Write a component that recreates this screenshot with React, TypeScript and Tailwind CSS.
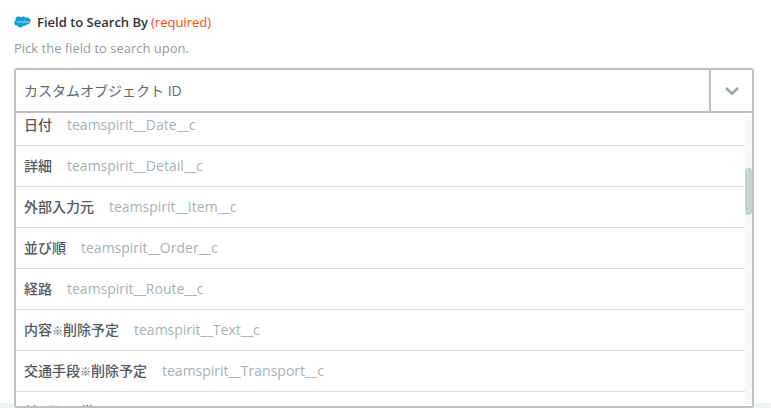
import React, { useState } from "react";

const options = [
  { label: "日付", api: "teamspirit__Date__c" },
  { label: "詳細", api: "teamspirit__Detail__c" },
  { label: "外部入力元", api: "teamspirit__Item__c" },
  { label: "並び順", api: "teamspirit__Order__c" },
  { label: "経路", api: "teamspirit__Route__c" },
  { label: "内容※削除予定", api: "teamspirit__Text__c" },
  { label: "交通手段※削除予定", api: "teamspirit__Transport__c" },
  { label: "並び順予備", api: "" },
];

function SalesforceLogo() {
  return (
    <svg width="17" height="12" viewBox="0 0 17 12" aria-hidden="true" className="shrink-0">
      <path
        fill="#0d9dda"
        d="M7 1.3C7.6.7 8.4.4 9.2.4c1.1 0 2 .6 2.5 1.4.4-.2.9-.3 1.4-.3 1.9 0 3.5 1.6 3.5 3.6s-1.6 3.6-3.5 3.6l-.7-.1c-.4.8-1.3 1.3-2.2 1.3-.4 0-.8-.1-1.1-.2-.5 1.1-1.5 1.8-2.8 1.8-1.3 0-2.4-.8-2.8-2l-.6.1C1.400 9.600.3 8.400.3 6.900c0-1 .5-1.900 1.300-2.300-.2-.4-.2-.8-.2-1.200C1.400 1.700 2.800.4 4.400.4 5.500.4 6.400.7 7 1.300z"
      />
      <text x="3" y="6.500" fontSize="3" fontStyle="italic" fill="#d9f1fb" className="font-['Open_Sans',sans-serif]">
        salesforce
      </text>
    </svg>
  );
}

// The reference mark ※ is set smaller and heavier than the kanji around it.
function OptionLabel({ text }: { text: string }) {
  const [head, tail] = text.split("※");
  return (
    <span className="font-medium text-[#54595f]">
      {head}
      {tail !== undefined && <span className="text-[11px] font-bold">※</span>}
      {tail}
    </span>
  );
}

export default function App() {
  const [value, setValue] = useState("カスタムオブジェクト ID");
  const [open, setOpen] = useState(true);

  return (
    <div className="h-screen overflow-hidden bg-[#eff3f3] font-['Open_Sans','Noto_Sans_CJK_JP',sans-serif]">
      <section className="bg-white pt-3 pr-[17px] pb-[290px] pl-[14px]">
        <label htmlFor="search-field" className="flex h-5 items-center text-[13px] leading-5">
          <SalesforceLogo />
          <span className="ml-1.5 font-semibold text-[#2e3238]">Field to Search By</span>
          <span className="ml-[3px] text-[#ff4a00]">(required)</span>
        </label>
        <p className="mt-1.5 text-[13px] leading-5 text-[#959b9c]">Pick the field to search upon.</p>

        <div className="relative mt-2.5">
          <div className="flex h-[45px] rounded-t-[3px] border-2 border-[#bbc1c6]">
            <input
              id="search-field"
              value={value}
              onChange={(e) => setValue(e.target.value)}
              className="min-w-0 flex-1 bg-white px-2 text-sm text-[#5f666d] outline-none"
            />
            <button
              type="button"
              aria-label="Toggle options"
              onClick={() => setOpen(!open)}
              className="flex w-[43px] items-center justify-center border-l-2 border-[#bbc1c6]"
            >
              <svg width="16" height="10" viewBox="0 0 16 10" fill="none" stroke="#98a2a5" strokeWidth="2.400" aria-hidden="true">
                <path d="M2 2l6 5.500 6-5.500" />
              </svg>
            </button>
          </div>

          {open && (
            <div className="absolute inset-x-0 top-full flex h-[295px] overflow-hidden rounded-b-[3px] border-2 border-t-0 border-[#bbc1c6] bg-white">
              <ul className="-mt-2 min-w-0 flex-1">
                {options.map((o) => (
                  <li key={o.label} className="border-b border-[#d9dfe1]">
                    <button
                      type="button"
                      onClick={() => setValue(o.label)}
                      className="flex h-10 w-full items-center gap-[15px] px-2 text-left text-sm"
                    >
                      <OptionLabel text={o.label} />
                      <span className="text-[#a8b1b5]">{o.api}</span>
                    </button>
                  </li>
                ))}
              </ul>
              <div className="my-0.5 w-[7px] bg-[#f7f9f9] pt-[53px]">
                <div className="h-[47px] rounded-[3px] bg-[#c9d1d4]" />
              </div>
            </div>
          )}
        </div>
      </section>
    </div>
  );
}
